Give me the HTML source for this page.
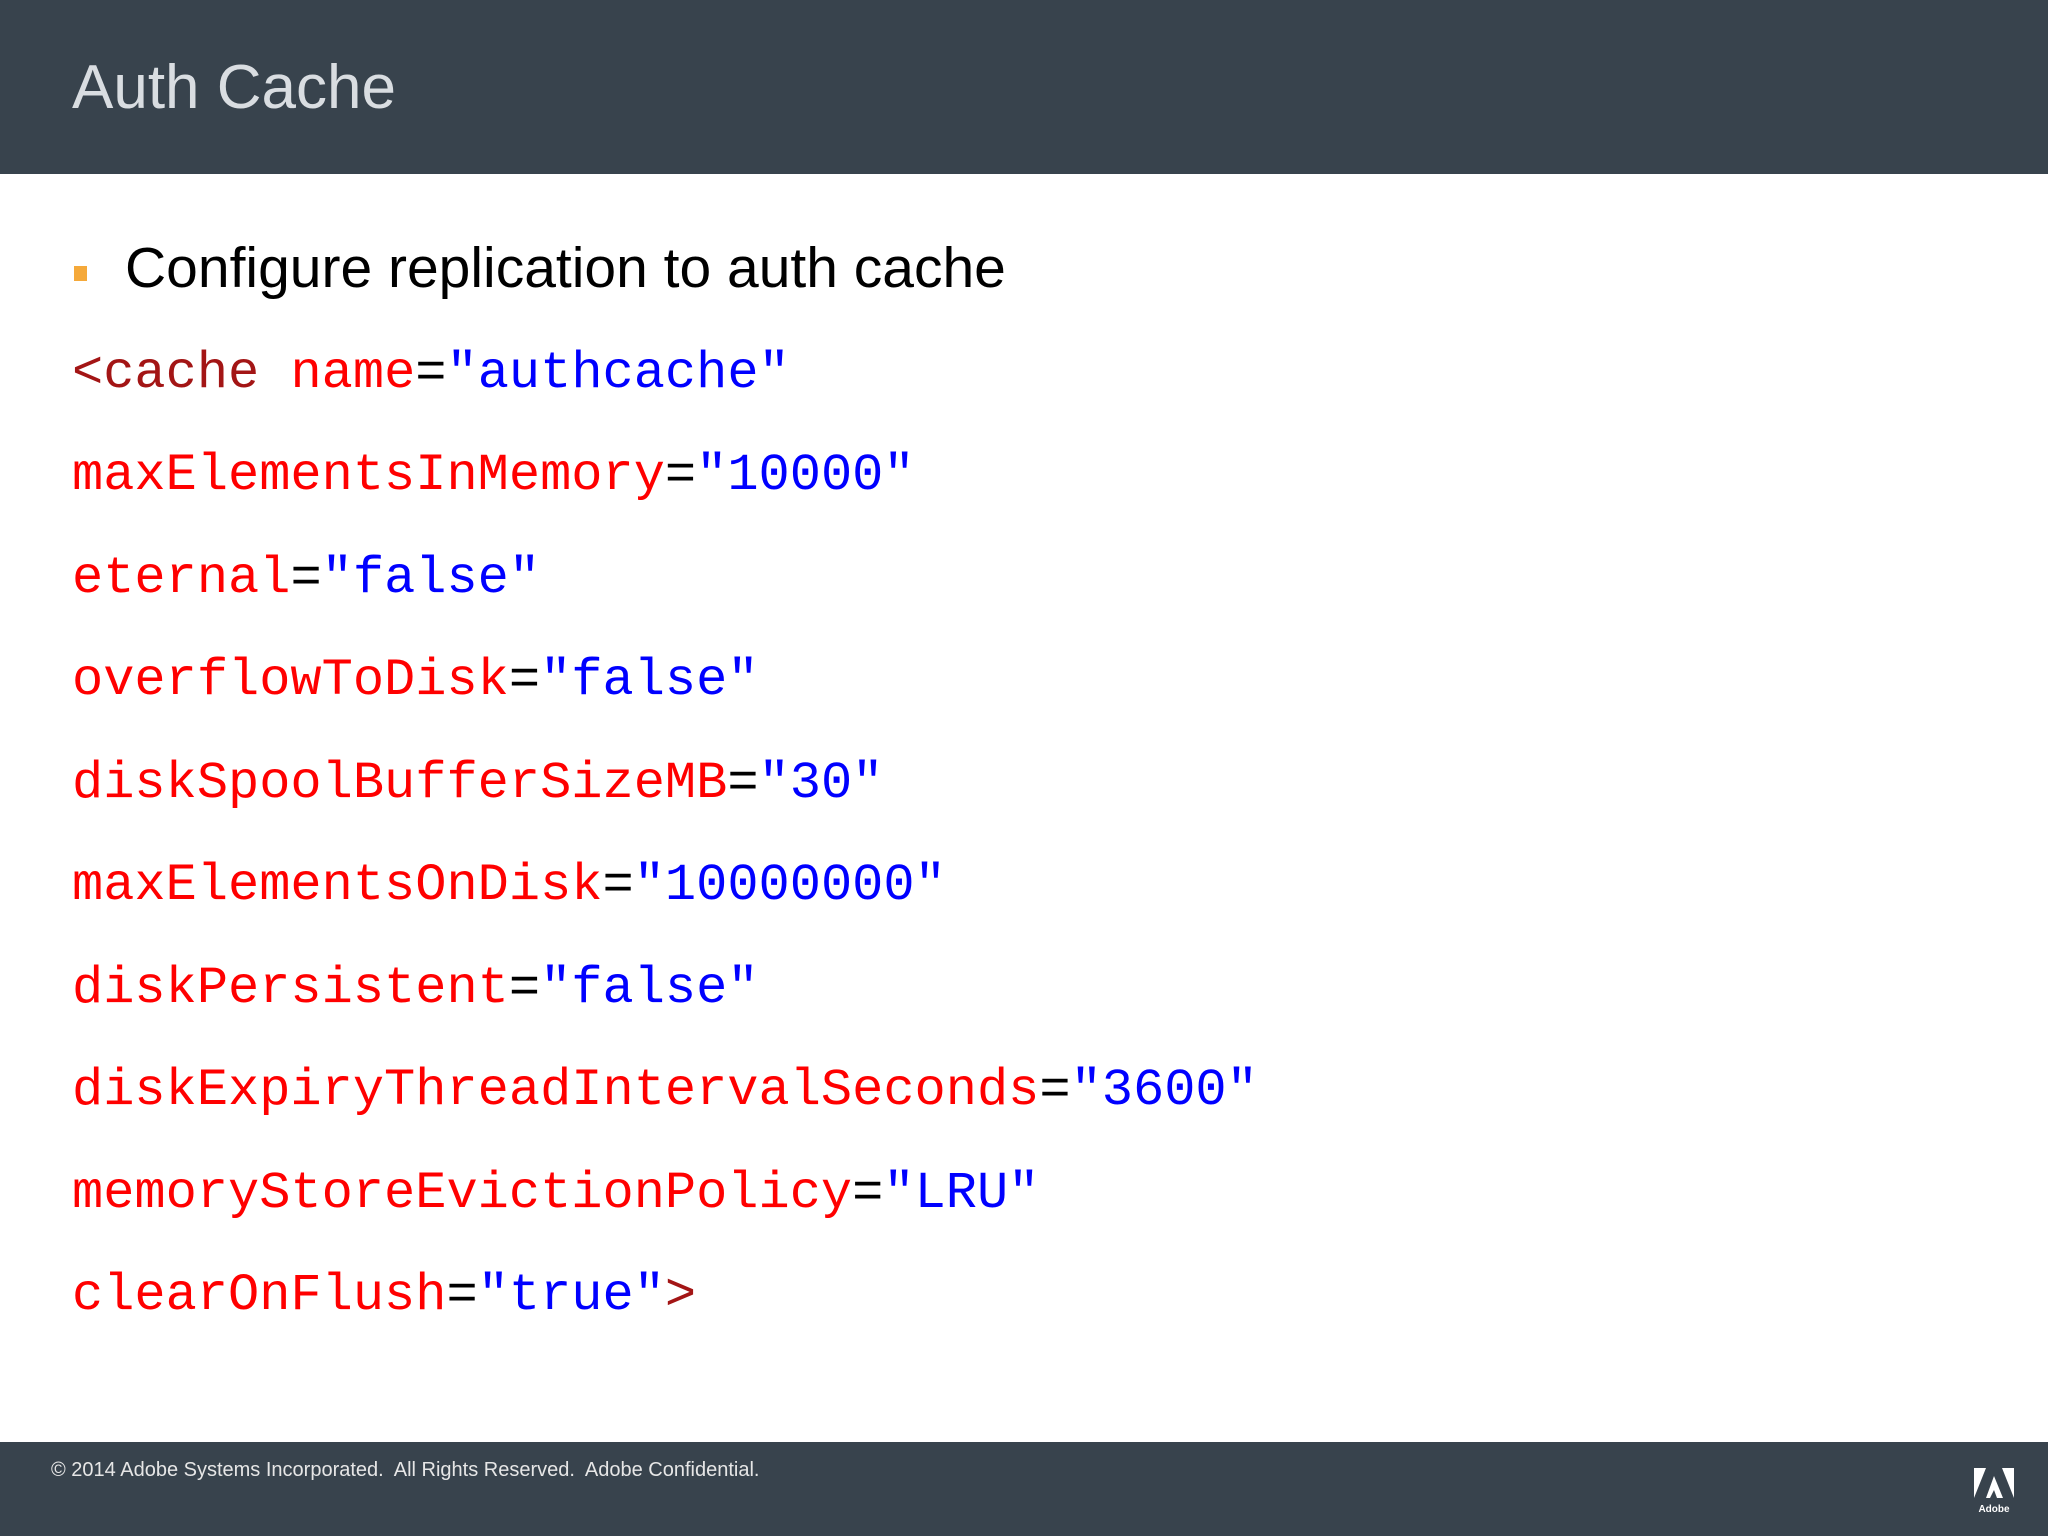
<!DOCTYPE html>
<html><head><meta charset="utf-8"><style>
*{margin:0;padding:0}
body{width:2048px;height:1536px;position:relative;background:#fff;overflow:hidden;font-family:"Liberation Sans",sans-serif}
.hd{position:absolute;left:0;top:0;width:2048px;height:174px;background:#38434d}
.hd div{position:absolute;left:72px;top:57px;font-size:62px;color:#d9dde1;line-height:1}
.b{position:absolute;left:74px;top:266px;width:13px;height:15px;background:#f5a93a}
.bt{position:absolute;left:125px;top:240px;font-size:57px;line-height:1;color:#000}
.c{position:absolute;left:72px;font-family:"Liberation Mono",monospace;font-size:52px;line-height:1;white-space:pre;color:#000}
.t{color:#a31515}.a{color:#f00}.v{color:#00f}
.ft{position:absolute;left:0;top:1442px;width:2048px;height:94px;background:#38434d}
.ft span{position:absolute;left:51px;top:17px;font-size:20px;color:#e6e6e6}
</style></head><body>
<div class="hd"><div>Auth Cache</div></div>
<div class="b"></div>
<div class="bt">Configure replication to auth cache</div>
<div class="c" style="top:348px"><span class="t">&lt;cache</span> <span class="a">name</span>=<span class="v">"authcache"</span></div>
<div class="c" style="top:450px"><span class="a">maxElementsInMemory</span>=<span class="v">"10000"</span></div>
<div class="c" style="top:553px"><span class="a">eternal</span>=<span class="v">"false"</span></div>
<div class="c" style="top:655px"><span class="a">overflowToDisk</span>=<span class="v">"false"</span></div>
<div class="c" style="top:758px"><span class="a">diskSpoolBufferSizeMB</span>=<span class="v">"30"</span></div>
<div class="c" style="top:860px"><span class="a">maxElementsOnDisk</span>=<span class="v">"10000000"</span></div>
<div class="c" style="top:963px"><span class="a">diskPersistent</span>=<span class="v">"false"</span></div>
<div class="c" style="top:1065px"><span class="a">diskExpiryThreadIntervalSeconds</span>=<span class="v">"3600"</span></div>
<div class="c" style="top:1168px"><span class="a">memoryStoreEvictionPolicy</span>=<span class="v">"LRU"</span></div>
<div class="c" style="top:1270px"><span class="a">clearOnFlush</span>=<span class="v">"true"</span><span class="t">&gt;</span></div>
<div class="ft"><span>© 2014 Adobe Systems Incorporated.&nbsp; All Rights Reserved.&nbsp; Adobe Confidential.</span>
<svg style="position:absolute;left:1974px;top:26px" width="40" height="48" viewBox="0 0 40 48">
<path d="M0 0H12L0 30Z M28 0H40V30Z M20 8L29 30H23L20 22L16 30H12Z" fill="#fff"/>
<text x="20" y="44" font-size="10" fill="#fff" text-anchor="middle" font-family="Liberation Sans" font-weight="bold">Adobe</text>
</svg></div>
</body></html>
